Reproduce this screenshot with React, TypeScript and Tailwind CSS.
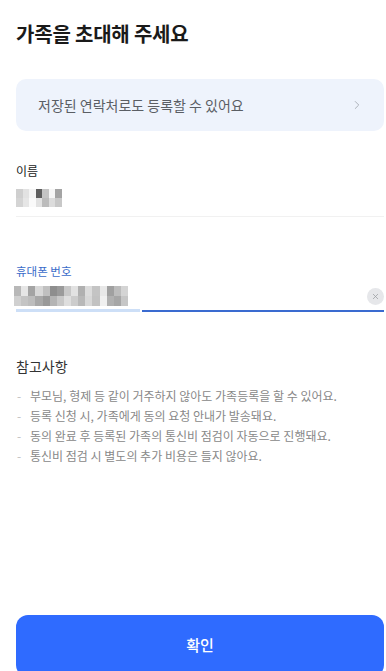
import { ChevronRight, X } from 'lucide-react';

const nameBlocks = [
  'bg-[#cfcfcf]', 'bg-[#e2e2e2]', 'bg-[#f4f4f4]', 'bg-[#5e5e5e]', 'bg-[#c4c4c4]', 'bg-[#f6f6f6]', 'bg-[#a4a4a4]',
  'bg-[#d4d4d4]', 'bg-[#e6e6e6]', 'bg-[#fafafa]', 'bg-[#e2e2e2]', 'bg-[#bcbcbc]', 'bg-[#dcdcdc]', 'bg-[#c8c8c8]',
];

const phoneBlocks = [
  'bg-[#b8b8b8]', 'bg-[#e6e6e6]', 'bg-[#a4a4a4]', 'bg-[#d8d8d8]', 'bg-[#c0c0c0]', 'bg-[#8e8e8e]', 'bg-[#9a9a9a]', 'bg-[#c8c8c8]',
  'bg-[#e2e2e2]', 'bg-[#b0b0b0]', 'bg-[#dcdcdc]', 'bg-[#c4c4c4]', 'bg-[#e8e8e8]', 'bg-[#a0a0a0]', 'bg-[#bcbcbc]', 'bg-[#d4d4d4]',
  'bg-[#d0d0d0]', 'bg-[#c4c4c4]', 'bg-[#bdbdbd]', 'bg-[#a8a8a8]', 'bg-[#999999]', 'bg-[#b4b4b4]', 'bg-[#c8c8c8]', 'bg-[#dedede]',
  'bg-[#cccccc]', 'bg-[#b8b8b8]', 'bg-[#d8d8d8]', 'bg-[#c2c2c2]', 'bg-[#f0f0f0]', 'bg-[#b0b0b0]', 'bg-[#a6a6a6]', 'bg-[#c6c6c6]',
];

const notes = [
  '부모님, 형제 등 같이 거주하지 않아도 가족등록을 할 수 있어요.',
  '등록 신청 시, 가족에게 동의 요청 안내가 발송돼요.',
  '동의 완료 후 등록된 가족의 통신비 점검이 자동으로 진행돼요.',
  '통신비 점검 시 별도의 추가 비용은 들지 않아요.',
];

export default function App() {
  return (
    <div className="flex h-screen flex-col overflow-hidden bg-white pl-4 pr-[2px] font-['Noto_Sans_CJK_KR',sans-serif] text-[#222]">
      <h1 className="pt-[20px] text-[20px] font-bold leading-[28px] tracking-[-0.2px] text-[#1a1a1a]">가족을 초대해 주세요</h1>

      <div className="mt-[31px] flex h-[52px] shrink-0 items-center justify-between rounded-[10px] bg-[#eef3fc] pl-[22px] pr-[20px]">
        <span className="text-[14px] leading-5 text-[#5a5e64]">저장된 연락처로도 등록할 수 있어요</span>
        <ChevronRight size={14} strokeWidth={1.5} className="text-[#a3a8b0]" />
      </div>

      <div className="mt-8">
        <div className="text-[12px] leading-4 text-[#222]">이름</div>
        <div className="mt-[10px] grid h-[18px] w-[46px] grid-cols-7 blur-[0.4px]">
          {nameBlocks.map((c, i) => (
            <div key={i} className={c} />
          ))}
        </div>
        <div className="mt-[9px] h-px bg-[#f1f1f1]" />
      </div>

      <div className="mt-[46px]">
        <div className="text-[11.5px] leading-4 text-[#3b6cc9]">휴대폰 번호</div>
        <div className="mt-[7px] flex h-5 items-center justify-between">
          <div className="-ml-[2px] grid h-5 w-[114px] grid-cols-16 blur-[0.5px]">
            {phoneBlocks.map((c, i) => (
              <div key={i} className={c} />
            ))}
          </div>
          <div className="flex h-[17px] w-[17px] items-center justify-center rounded-full bg-[#e6e7ea]">
            <X size={9} strokeWidth={2} className="text-[#9a9ca0]" />
          </div>
        </div>
        <div className="mt-[3px] flex items-end gap-[2px]">
          <div className="h-[3px] w-[124px] bg-[#cddff7]" />
          <div className="h-[2px] flex-1 bg-[#3a6bd0]" />
        </div>
      </div>

      <div className="mt-[43px]">
        <div className="text-[14px] leading-[22px] text-[#333]">참고사항</div>
        <ul className="mt-[9px]">
          {notes.map((n) => (
            <li key={n} className="flex text-[12px] leading-5 text-[#888]">
              <span className="w-[14px] pl-px text-[#c0c0c0]">-</span>
              <span>{n}</span>
            </li>
          ))}
        </ul>
      </div>

      <button className="mt-auto -mb-[6px] flex h-[62px] w-full shrink-0 items-start justify-center rounded-[12px] bg-[#2f6bff] pt-[20px] text-[15px] font-medium leading-5 text-white">
        확인
      </button>
    </div>
  );
}
